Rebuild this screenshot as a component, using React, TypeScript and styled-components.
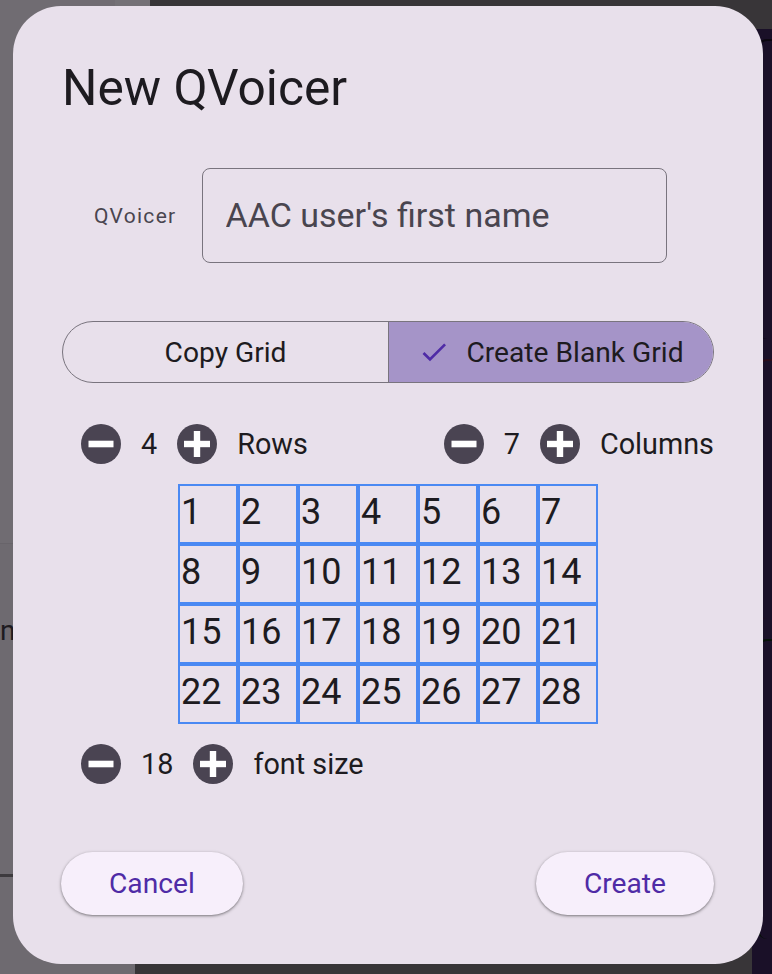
import React from "react";
import styled, { createGlobalStyle } from "styled-components";

const GlobalStyle = createGlobalStyle`
  html, body {
    margin: 0;
    padding: 0;
    overflow: hidden;
    font-family: Roboto, "Noto Sans", sans-serif;
  }
  * { box-sizing: border-box; }
`;

const Page = styled.div`
  position: relative;
  width: 772px;
  height: 974px;
  overflow: hidden;
  display: grid;
  grid-template-columns: 135px 1fr;
  background: #383538;
`;

const LeftPane = styled.div`
  background: #6e6a70;
  display: flex;
  flex-direction: column;
`;

const UpperPanel = styled.div`
  height: 544px;
  display: grid;
  grid-template-columns: 115px 1fr;
  background: #706c72;
  border-bottom: 1px solid #68646a;
`;

const UpperPanelEdge = styled.div`
  grid-column: 2;
  background: #747176;
`;

const PaneItem = styled.div`
  height: 72px;
  margin-top: 50px;
  display: flex;
  align-items: center;
  font-size: 28px;
  color: #1d1b20;
`;

const PaneDivider = styled.div`
  margin-top: 208px;
  height: 3px;
  background: #3d3a3e;
`;

const MainArea = styled.div`
  display: flex;
  flex-direction: column;
`;

const TopStrip = styled.div`
  height: 29px;
  display: grid;
  grid-template-columns: 15px 1fr;
`;

const TopStripLight = styled.div`
  background: #747176;
`;

const Workspace = styled.div`
  flex: 1;
  display: flex;
  justify-content: flex-end;
`;

const SidePanel = styled.div`
  width: 20px;
  background: #1a1028;
  display: flex;
  flex-direction: column;
  gap: 20px;
  padding: 10px 0 0 5px;
`;

const SideCard = styled.div<{ $tone: string; $h: number }>`
  height: ${(p) => p.$h}px;
  border-left: 2px solid ${(p) => p.$tone};
  border-top: 2px solid ${(p) => p.$tone};
  border-radius: 10px 0 0 10px;
`;

const Overlay = styled.div`
  position: absolute;
  inset: 0;
  padding: 6px 9px 0 13px;
`;

const Dialog = styled.section`
  width: 750px;
  background: #e8e0eb;
  border-radius: 48px;
  padding: 54px 49px 49px;
  display: flex;
  flex-direction: column;
`;

const Title = styled.h1`
  margin: 0;
  font-family: Roboto, sans-serif;
  font-weight: 400;
  font-size: 49.7px;
  line-height: 56px;
  color: #1d1b20;
`;

const FieldRow = styled.div`
  margin-top: 52px;
  padding-left: 32px;
  display: flex;
  align-items: center;
  gap: 25px;
`;

const FieldLabel = styled.label`
  font-size: 21px;
  letter-spacing: 1.3px;
  color: #49454f;
`;

const TextInput = styled.input`
  width: 465px;
  height: 95px;
  border: 1.5px solid #79747e;
  border-radius: 8px;
  background: transparent;
  padding: 0 0 2px 23px;
  font-family: Roboto, sans-serif;
  font-size: 34px;
  color: #1d1b20;
  outline: none;
  &::placeholder {
    color: #49454f;
  }
`;

const Segmented = styled.div`
  margin-top: 58px;
  height: 62px;
  display: grid;
  grid-template-columns: 1fr 1fr;
  border: 1.5px solid #79747e;
  border-radius: 31px;
  overflow: hidden;
`;

const Segment = styled.button<{ $selected?: boolean }>`
  border: none;
  border-left: ${(p) => (p.$selected ? "1.5px solid #79747e" : "none")};
  background: ${(p) => (p.$selected ? "#a594c8" : "transparent")};
  display: flex;
  align-items: center;
  justify-content: center;
  gap: 16px;
  font-family: Roboto, sans-serif;
  font-size: 28.2px;
  color: #1d1b20;
  padding: 0;
`;

const StepRow = styled.div<{ $gapTop: number }>`
  margin-top: ${(p) => p.$gapTop}px;
  height: 48px;
  padding-left: 15px;
  display: flex;
  align-items: center;
  justify-content: space-between;
`;

const StepGroup = styled.div`
  display: flex;
  align-items: center;
  gap: 16px;
`;

const IconButton = styled.button`
  width: 48px;
  height: 48px;
  padding: 0;
  border: none;
  background: transparent;
  display: grid;
  place-items: center;
`;

const StepText = styled.span`
  font-size: 28.8px;
  color: #1d1b20;
`;

const GridPreview = styled.div`
  margin: 16px auto 0;
  display: grid;
  grid-template-columns: repeat(7, 60px);
  grid-auto-rows: 60px;
`;

const Cell = styled.div`
  border: 2px solid #4a89f3;
  padding: 5px 0 0 1px;
  font-size: 36px;
  line-height: 42px;
  color: #1d1b20;
`;

const Actions = styled.div`
  margin-top: 64px;
  display: flex;
  justify-content: space-between;
`;

const ActionButton = styled.button`
  height: 63px;
  padding: 0 48px;
  border: none;
  border-radius: 32px;
  background: #f7effb;
  color: #4f2ba6;
  font-family: Roboto, sans-serif;
  font-size: 28.2px;
  box-shadow: 0 1px 2px rgba(0, 0, 0, 0.3), 0 1px 3px 1px rgba(0, 0, 0, 0.15);
  &:first-child {
    margin-left: -1px;
  }
`;

const MinusIcon = () => (
  <svg width="40" height="40" viewBox="0 0 40 40">
    <circle cx="20" cy="20" r="20" fill="#4a4452" />
    <rect x="7.5" y="16.7" width="25" height="6.6" fill="#ffffff" />
  </svg>
);

const PlusIcon = () => (
  <svg width="40" height="40" viewBox="0 0 40 40">
    <circle cx="20" cy="20" r="20" fill="#4a4452" />
    <rect x="7" y="16.8" width="26" height="6.4" fill="#ffffff" />
    <rect x="16.8" y="7" width="6.4" height="26" fill="#ffffff" />
  </svg>
);

const CheckIcon = () => (
  <svg width="32" height="32" viewBox="0 0 24 24">
    <path d="M9 16.17L4.83 12l-1.42 1.41L9 19 21 7l-1.41-1.41z" fill="#4f2ba6" />
  </svg>
);

function Stepper({ value, label }: { value: number; label: string }) {
  return (
    <StepGroup>
      <IconButton aria-label={`decrease ${label}`}>
        <MinusIcon />
      </IconButton>
      <StepText>{value}</StepText>
      <IconButton aria-label={`increase ${label}`}>
        <PlusIcon />
      </IconButton>
      <StepText>{label}</StepText>
    </StepGroup>
  );
}

export default function App() {
  const rows = 4;
  const cols = 7;
  const cells = Array.from({ length: rows * cols }, (_, i) => i + 1);
  return (
    <>
      <GlobalStyle />
      <Page>
        <LeftPane>
          <UpperPanel>
            <UpperPanelEdge />
          </UpperPanel>
          <PaneItem>n</PaneItem>
          <PaneDivider />
        </LeftPane>
        <MainArea>
          <TopStrip>
            <TopStripLight />
            <div />
          </TopStrip>
          <Workspace>
            <SidePanel>
              <SideCard $tone="#0b0710" $h={300} />
              <SideCard $tone="#2a0d1a" $h={260} />
              <SideCard $tone="#061208" $h={300} />
            </SidePanel>
          </Workspace>
        </MainArea>
        <Overlay>
          <Dialog>
            <Title>New QVoicer</Title>
            <FieldRow>
              <FieldLabel htmlFor="qv-name">QVoicer</FieldLabel>
              <TextInput id="qv-name" placeholder="AAC user's first name" />
            </FieldRow>
            <Segmented>
              <Segment>Copy Grid</Segment>
              <Segment $selected>
                <CheckIcon />
                Create Blank Grid
              </Segment>
            </Segmented>
            <StepRow $gapTop={37}>
              <Stepper value={rows} label="Rows" />
              <Stepper value={cols} label="Columns" />
            </StepRow>
            <GridPreview>
              {cells.map((n) => (
                <Cell key={n}>{n}</Cell>
              ))}
            </GridPreview>
            <StepRow $gapTop={16}>
              <Stepper value={18} label="font size" />
            </StepRow>
            <Actions>
              <ActionButton>Cancel</ActionButton>
              <ActionButton>Create</ActionButton>
            </Actions>
          </Dialog>
        </Overlay>
      </Page>
    </>
  );
}
